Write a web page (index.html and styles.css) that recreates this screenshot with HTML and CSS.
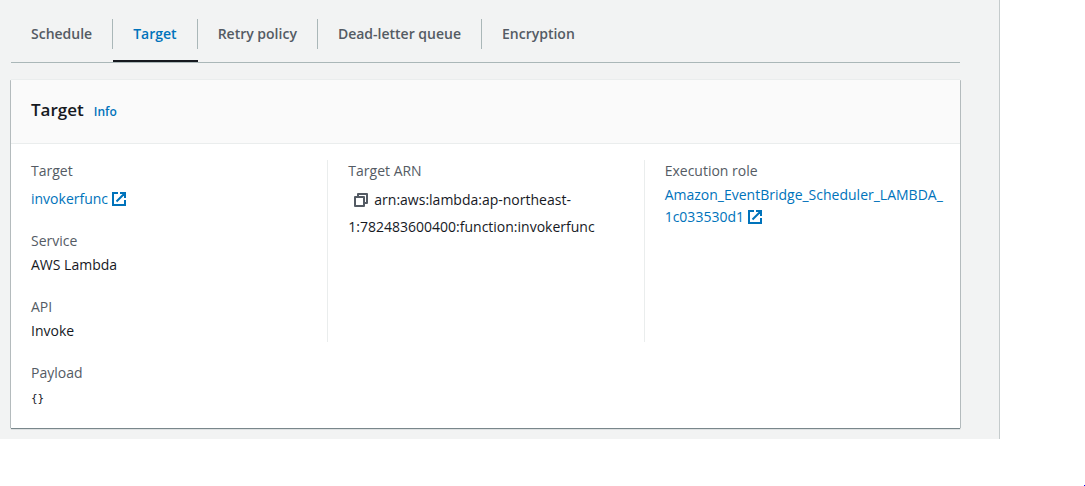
FILE: index.html
```html
<!DOCTYPE html>
<html lang="en">
<head>
<meta charset="utf-8">
<title>Schedule target</title>
<link rel="stylesheet" href="styles.css">
</head>
<body>
<svg class="sprite" aria-hidden="true">
  <symbol id="external" viewBox="0 0 14 14">
    <path d="M6 1H1v12h12V8M8 1h5v5M4.500 9.500 12.500 1.500" fill="none" stroke="currentColor" stroke-width="2"/>
  </symbol>
  <symbol id="copy" viewBox="0 0 14 14">
    <path d="M1 4h9v9H1zM4 4V1h9v9h-3" fill="none" stroke="currentColor" stroke-width="2" stroke-linejoin="round"/>
  </symbol>
</svg>
<main class="page">
  <nav class="tabs" aria-label="Schedule details">
    <button class="tab" type="button"><span class="tab-label">Schedule</span></button>
    <button class="tab tab-active" type="button" aria-current="true"><span class="tab-label">Target</span></button>
    <button class="tab" type="button"><span class="tab-label">Retry policy</span></button>
    <button class="tab" type="button"><span class="tab-label">Dead-letter queue</span></button>
    <button class="tab" type="button"><span class="tab-label">Encryption</span></button>
  </nav>
  <section class="card">
    <header class="card-header">
      <h2 class="card-title">Target</h2>
      <a class="info" href="#">Info</a>
    </header>
    <div class="card-body">
      <div class="columns">
        <dl class="column">
          <div class="field field-spaced">
            <dt>Target</dt>
            <dd><a href="#">invokerfunc <svg class="icon"><use href="#external"/></svg></a></dd>
          </div>
          <div class="field">
            <dt>Service</dt>
            <dd>AWS Lambda</dd>
          </div>
          <div class="field">
            <dt>API</dt>
            <dd>Invoke</dd>
          </div>
        </dl>
        <dl class="column">
          <div class="field field-arn">
            <dt>Target ARN</dt>
            <dd><button class="copy" type="button" aria-label="Copy ARN"><svg class="icon"><use href="#copy"/></svg></button>arn:aws:lambda:ap-northeast-<wbr>1:782483600400:function:invokerfunc</dd>
          </div>
        </dl>
        <dl class="column">
          <div class="field">
            <dt>Execution role</dt>
            <dd><a href="#">Amazon_EventBridge_Scheduler_LAMBDA_<wbr>1c033530d1 <svg class="icon"><use href="#external"/></svg></a></dd>
          </div>
        </dl>
      </div>
      <dl class="column">
        <div class="field">
          <dt>Payload</dt>
          <dd><code>{}</code></dd>
        </div>
      </dl>
    </div>
  </section>
</main>
<span class="corner-mark"></span>
</body>
</html>
```

FILE: styles.css
```css
* { box-sizing: border-box; }
body {
  margin: 0;
  background: #fff;
  color: #16191f;
  font: 14px/22px "Open Sans", "Noto Sans", sans-serif;
}
button { font: inherit; border: 0; background: none; padding: 0; color: inherit; cursor: pointer; }
a { color: #0073bb; text-decoration: none; }
dl, dd, h2 { margin: 0; }
.sprite { display: none; }
.page {
  margin-right: 85px;
  padding: 0 39px 11px 11px;
  background: #f2f3f3;
  border-right: 1px solid #c5cbcc;
}
.tabs {
  display: flex;
  height: 63px;
  border-bottom: 1px solid #aab7b8;
}
.tab {
  display: flex;
  align-items: flex-start;
  padding: 19px 0 11px;
  border-bottom: 2px solid transparent;
  color: #545b64;
  font-weight: 600;
}
.tab-label {
  height: 30px;
  padding: 0 20px;
  line-height: 30px;
  border-right: 1px solid #aab7b8;
}
.tab:last-child .tab-label { border-right: 0; }
.tab-active { color: #0073bb; border-bottom-color: #16191f; }
.card {
  margin-top: 17px;
  background: #fff;
  box-shadow: 0 1px 1px 0 rgba(0, 28, 36, .5), 1px 0 0 0 #c5cbcc, -1px 0 0 0 #c5cbcc, 0 -1px 0 0 #eaeded;
}
.card-header {
  display: flex;
  align-items: baseline;
  gap: 10px;
  padding: 18px 20px 20px;
  background: #fafafa;
  border-bottom: 1px solid #eaeded;
}
.card-title { font-size: 17px; line-height: 24px; font-weight: 600; }
.info { font-size: 12px; font-weight: 600; }
.card-body { display: grid; gap: 20px; padding: 16px 0 17px; }
.columns { display: grid; grid-template-columns: repeat(3, minmax(0, 1fr)); }
.column { display: flex; flex-direction: column; gap: 20px; padding: 0 20px; }
.column + .column { border-left: 1px solid #eaeded; }
.field { display: grid; gap: 2px; }
.field dt { color: #545b64; }
.field-spaced { gap: 6px; }
.field-arn { gap: 4px; }
.field-arn dd { line-height: 27px; }
.icon { width: 14px; height: 14px; vertical-align: -2px; }
.copy { margin: 0 6px; color: #545b64; line-height: 14px; }
code { font: 11px/24px "DejaVu Sans Mono", monospace; }
.corner-mark {
  position: fixed;
  right: 0;
  bottom: 0;
  width: 1px;
  height: 1px;
  background: #00f;
}
```
